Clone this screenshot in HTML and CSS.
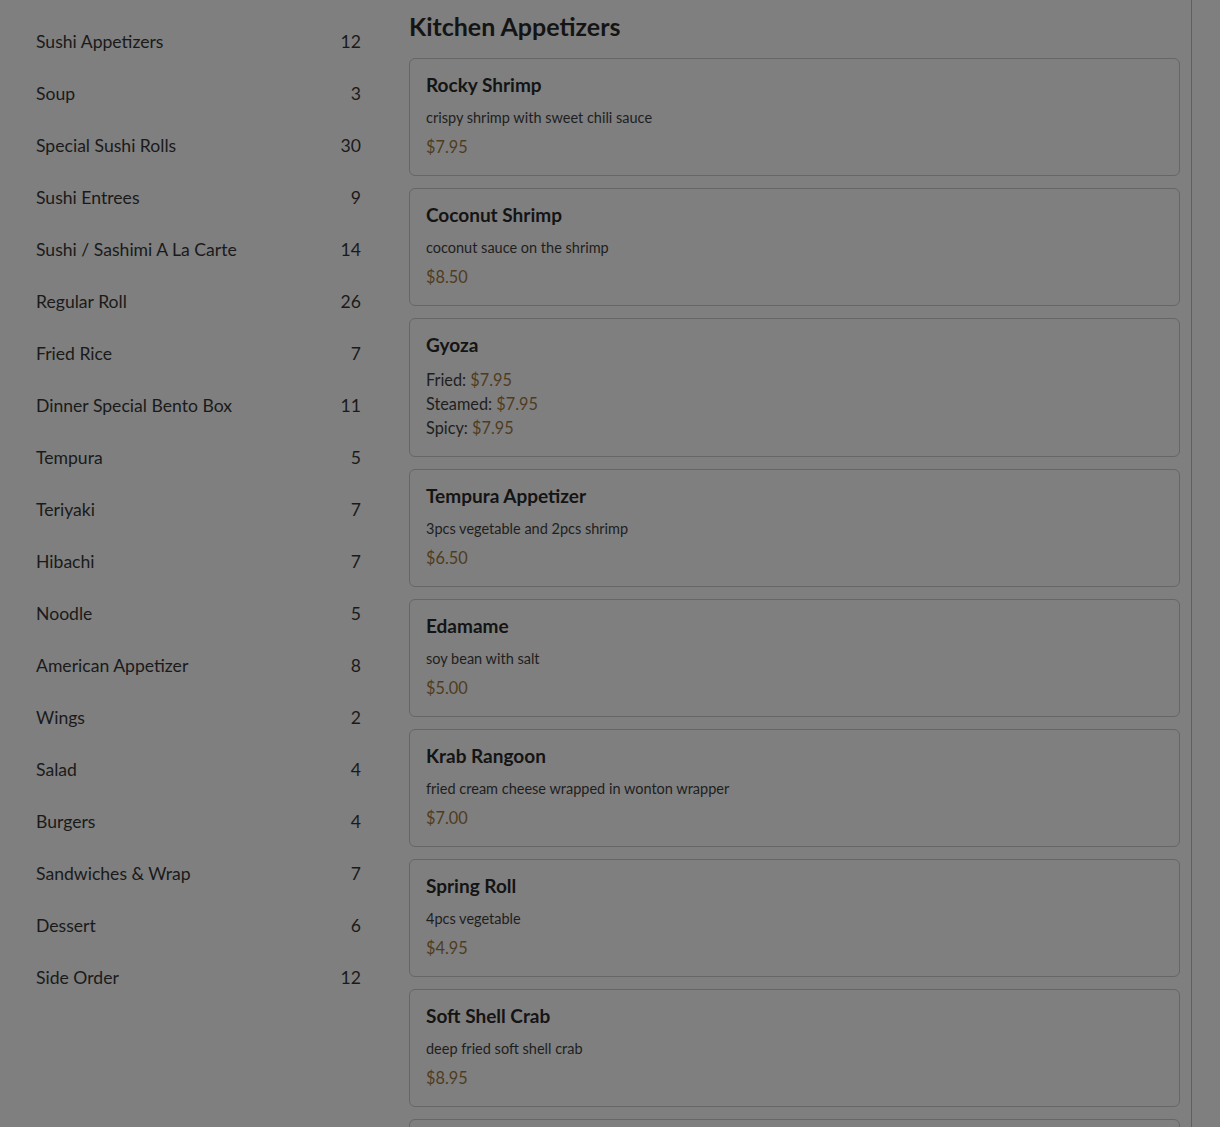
FILE: index.html
```
<!DOCTYPE html>
<html lang="en">
<head>
<meta charset="utf-8">
<title>Menu</title>
<link rel="stylesheet" href="styles.css">
</head>
<body>
<div class="page">
  <nav class="sidebar">
    <ul class="cats">
      <li><span>Sushi Appetizers</span><span>12</span></li>
      <li><span>Soup</span><span>3</span></li>
      <li><span>Special Sushi Rolls</span><span>30</span></li>
      <li><span>Sushi Entrees</span><span>9</span></li>
      <li><span>Sushi / Sashimi A La Carte</span><span>14</span></li>
      <li><span>Regular Roll</span><span>26</span></li>
      <li><span>Fried Rice</span><span>7</span></li>
      <li><span>Dinner Special Bento Box</span><span>11</span></li>
      <li><span>Tempura</span><span>5</span></li>
      <li><span>Teriyaki</span><span>7</span></li>
      <li><span>Hibachi</span><span>7</span></li>
      <li><span>Noodle</span><span>5</span></li>
      <li><span>American Appetizer</span><span>8</span></li>
      <li><span>Wings</span><span>2</span></li>
      <li><span>Salad</span><span>4</span></li>
      <li><span>Burgers</span><span>4</span></li>
      <li><span>Sandwiches &amp; Wrap</span><span>7</span></li>
      <li><span>Dessert</span><span>6</span></li>
      <li><span>Side Order</span><span>12</span></li>
    </ul>
  </nav>
  <main class="menu">
    <h2 class="section-title">Kitchen Appetizers</h2>
    <div class="items">
      <div class="card">
        <h3 class="card-title">Rocky Shrimp</h3>
        <p class="desc">crispy shrimp with sweet chili sauce</p>
        <p class="price">$7.95</p>
      </div>
      <div class="card">
        <h3 class="card-title">Coconut Shrimp</h3>
        <p class="desc">coconut sauce on the shrimp</p>
        <p class="price">$8.50</p>
      </div>
      <div class="card">
        <h3 class="card-title">Gyoza</h3>
        <div class="options">
          <p class="option">Fried: <span class="price-inline">$7.95</span></p>
          <p class="option">Steamed: <span class="price-inline">$7.95</span></p>
          <p class="option">Spicy: <span class="price-inline">$7.95</span></p>
        </div>
      </div>
      <div class="card">
        <h3 class="card-title">Tempura Appetizer</h3>
        <p class="desc">3pcs vegetable and 2pcs shrimp</p>
        <p class="price">$6.50</p>
      </div>
      <div class="card">
        <h3 class="card-title">Edamame</h3>
        <p class="desc">soy bean with salt</p>
        <p class="price">$5.00</p>
      </div>
      <div class="card">
        <h3 class="card-title">Krab Rangoon</h3>
        <p class="desc">fried cream cheese wrapped in wonton wrapper</p>
        <p class="price">$7.00</p>
      </div>
      <div class="card">
        <h3 class="card-title">Spring Roll</h3>
        <p class="desc">4pcs vegetable</p>
        <p class="price">$4.95</p>
      </div>
      <div class="card">
        <h3 class="card-title">Soft Shell Crab</h3>
        <p class="desc">deep fried soft shell crab</p>
        <p class="price">$8.95</p>
      </div>
      <div class="card card-empty"></div>
    </div>
  </main>
  <aside class="cart"></aside>
</div>
</body>
</html>
```
FILE: styles.css
```
html, body {
  margin: 0;
  padding: 0;
  background: #7f7f7f;
  height: 100%;
  overflow: hidden;
}
body {
  font-family: "Lato", "Noto Sans", sans-serif;
  color: #1a1a1a;
}
.page {
  display: grid;
  grid-template-columns: 325px 771px 1fr;
  column-gap: 48px;
  padding-left: 36px;
  height: 100%;
  box-sizing: border-box;
}
.cats {
  list-style: none;
  margin: 0;
  padding: 16px 0 0;
}
.cats li {
  display: flex;
  justify-content: space-between;
  font-size: 17.6px;
  line-height: 26px;
  padding: 13px 0;
  color: #1a1a1a;
}
.menu {
  padding-top: 12px;
}
.section-title {
  margin: 0 0 17px;
  font-size: 25px;
  line-height: 29px;
  font-weight: 700;
  color: #141414;
}
.items {
  display: flex;
  flex-direction: column;
  gap: 12px;
}
.card {
  border: 1px solid #666;
  border-radius: 6px;
  padding: 15px 16px 16px;
}
.card-empty {
  height: 80px;
}
.card-title {
  margin: 0 0 11px;
  font-size: 19px;
  line-height: 22px;
  font-weight: 700;
  color: #141414;
}
.desc {
  margin: 0 0 7px;
  font-size: 14.5px;
  line-height: 21px;
  color: #1e1e1e;
}
.price {
  margin: 0;
  font-size: 16.3px;
  line-height: 24px;
  color: #4f3c20;
}
.options {
  padding-top: 1px;
}
.option {
  margin: 0;
  font-size: 16.3px;
  line-height: 24px;
  color: #1e1e1e;
}
.price-inline {
  color: #4f3c20;
}
.cart {
  margin-left: -37px;
  border-left: 1px solid #5f5f5f;
}
```
